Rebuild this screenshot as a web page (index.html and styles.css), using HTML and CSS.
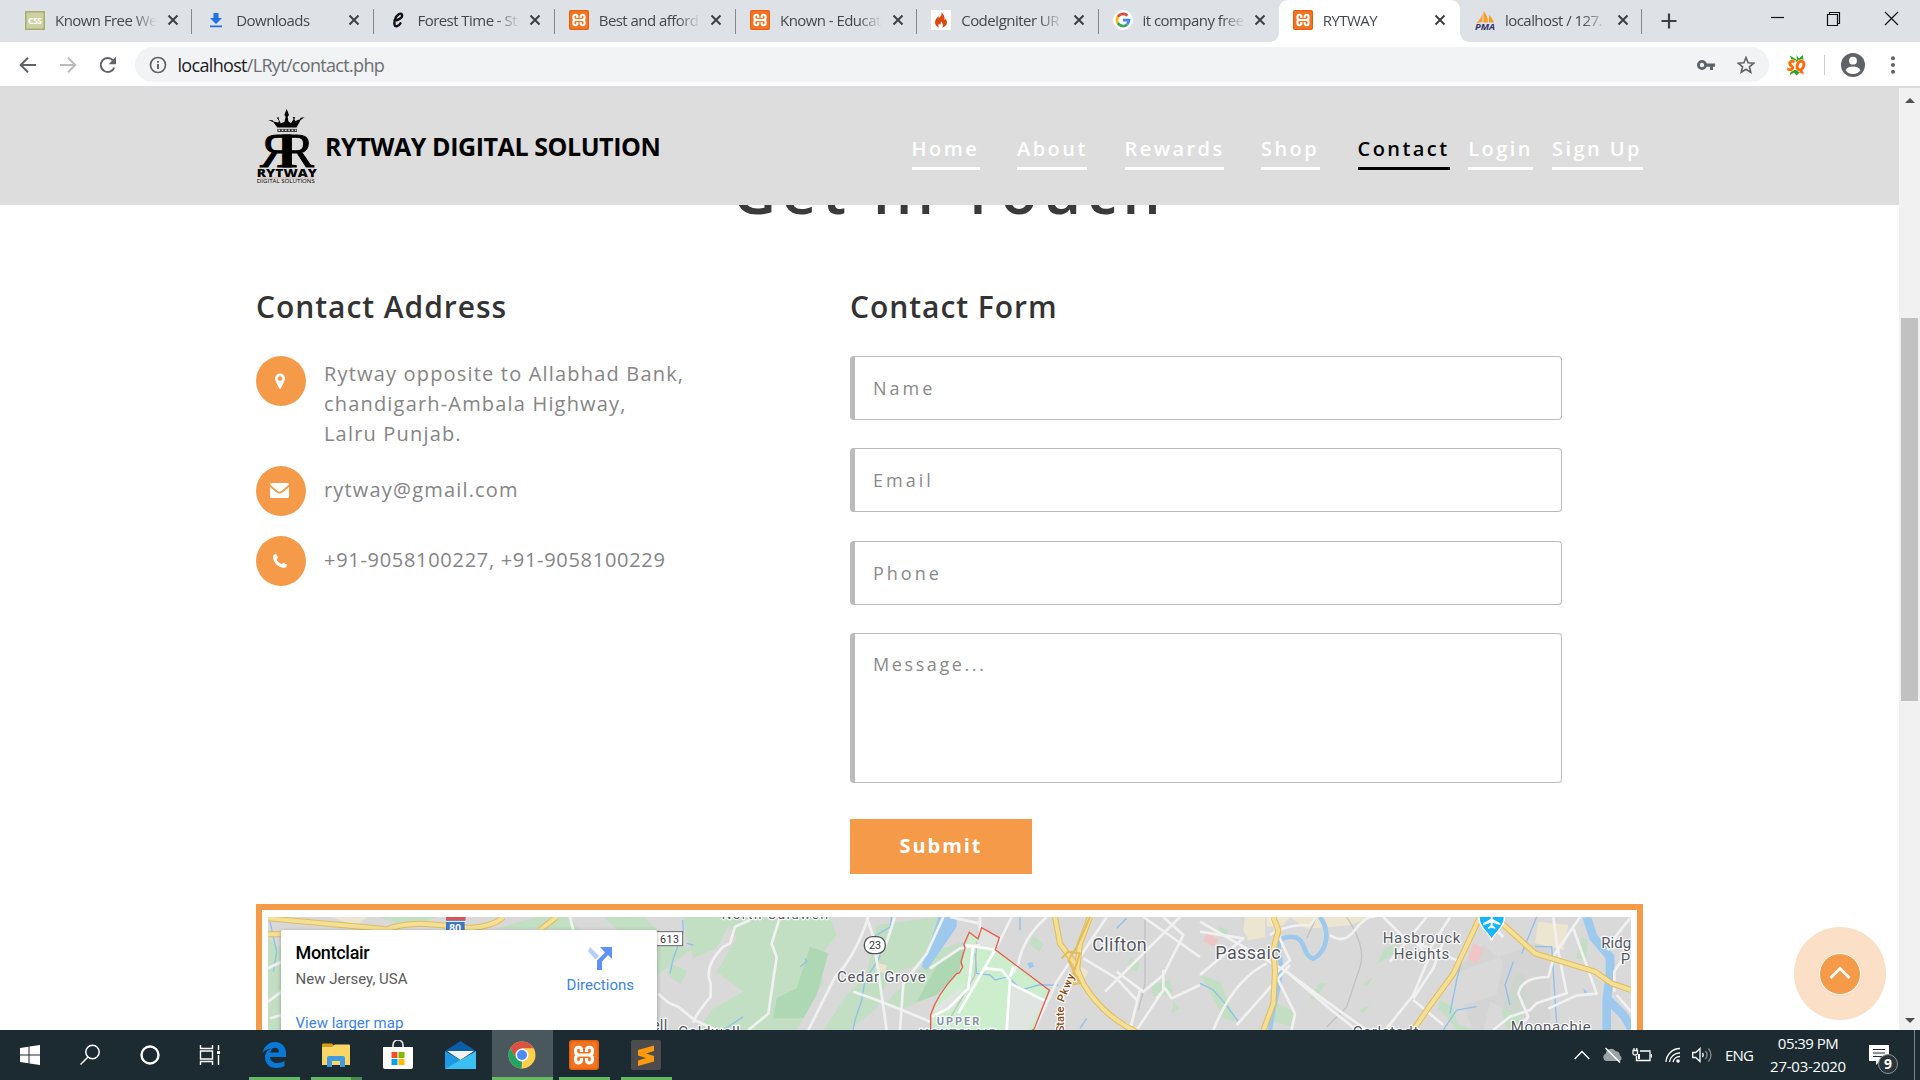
FILE: index.html
```html
<!DOCTYPE html>
<html lang="en">
<head>
<meta charset="utf-8">
<title>RYTWAY</title>
<link rel="stylesheet" href="styles.css">
</head>
<body>
<svg class="defs" width="0" height="0">
  <symbol id="close" viewBox="0 0 12 12"><path d="M1.5 1.5l9 9M10.5 1.5l-9 9" stroke="#3c4043" stroke-width="2" fill="none"/></symbol>
  <symbol id="xampp" viewBox="0 0 20 20">
    <rect width="20" height="20" rx="2" fill="#e0600f"/><rect x="1" y="1" width="18" height="18" rx="1.500" fill="#f47321"/>
    <path d="M8.300 8V6.800Q8.300 4.800 6.400 4.800T4.400 6.800V7.800Q4.400 10 7 10H13Q15.600 10 15.600 7.800V6.800Q15.600 4.800 13.600 4.800T11.700 6.800V8M8.300 12V13.200Q8.300 15.200 6.400 15.200T4.400 13.200V12.200Q4.400 10 7 10H13Q15.600 10 15.600 12.200V13.200Q15.600 15.200 13.600 15.200T11.700 13.200V12" fill="none" stroke="#fff" stroke-width="2.100"/>
  </symbol>
</svg>

<div class="tabs">
  <div class="tab">
    <svg class="fav" viewBox="0 0 20 20"><rect width="20" height="20" y="1" fill="#a9ad6a"/><rect x="1.500" y="2.500" width="17" height="16" fill="#cdd0a0"/><text x="10" y="14" font-size="9" font-weight="700" text-anchor="middle" textLength="14" fill="#fff">CSS</text></svg>
    <span class="name">Known Free We</span><svg class="x"><use href="#close"/></svg>
  </div>
  <div class="tab">
    <svg class="fav" viewBox="0 0 20 20"><path d="M7.500 3h5v5H16l-6 6-6-6h3.500zM4 15.500h12v1.800H4z" fill="#1a73e8"/></svg>
    <span class="name">Downloads</span><svg class="x"><use href="#close"/></svg>
  </div>
  <div class="tab">
    <svg class="fav" viewBox="0 0 20 20"><path d="M6.500 10.500c4 0 8.500-3.200 7.500-5.800C13 2 8.500 4.500 7 9.500s-.3 7 1.800 6.700c1.900-.3 3-1.600 3.700-2.900" fill="none" stroke="#111" stroke-width="2.400" stroke-linecap="round"/></svg>
    <span class="name">Forest Time - St</span><svg class="x"><use href="#close"/></svg>
  </div>
  <div class="tab"><svg class="fav"><use href="#xampp"/></svg><span class="name">Best and afford</span><svg class="x"><use href="#close"/></svg></div>
  <div class="tab"><svg class="fav"><use href="#xampp"/></svg><span class="name">Known - Educat</span><svg class="x"><use href="#close"/></svg></div>
  <div class="tab">
    <svg class="fav" viewBox="0 0 20 20"><rect width="20" height="20" fill="#fff"/><path d="M10.500 2.500c.5 3 -1.200 4-2.500 5.500-.5-.6-.5-1.200-.3-2C5.500 8 4 10 4 12.500 4 15 6 17 8.200 17.500c-1-1-1.200-2.600 0-4 .2.800.7 1 1.200 1.100.5-1 .2-2 1-3.100.3 1.500 2 2.500 1.500 4.300-.1.700-.5 1.200-1 1.700C14 17 16 15 16 12.500c0-1.700-1-3-1.500-3.900-.1.800-.4 1.200-1 1.600.5-3-.7-6-3-7.700z" fill="#dd4814"/></svg>
    <span class="name">CodeIgniter UR</span><svg class="x"><use href="#close"/></svg>
  </div>
  <div class="tab last">
    <svg class="fav" viewBox="0 0 20 20"><circle cx="10" cy="10" r="10" fill="#fff"/><g fill="none" stroke-width="2.700"><path d="M4.800 6.900A6 6 0 0 1 14.300 5.800" stroke="#ea4335"/><path d="M4.800 13A6 6 0 0 1 4.800 6.900" stroke="#fbbc05"/><path d="M14 14.500A6 6 0 0 1 4.800 13" stroke="#34a853"/><path d="M10 10.200h6a6 6 0 0 1-2 4.300" stroke="#4285f4"/></g></svg>
    <span class="name">it company free</span><svg class="x"><use href="#close"/></svg>
  </div>
  <div class="tab active"><svg class="fav"><use href="#xampp"/></svg><span class="name">RYTWAY</span><svg class="x"><use href="#close"/></svg></div>
  <div class="tab">
    <svg class="fav" viewBox="0 0 20 20"><path d="M1 13C4 11 7 7 7.500 3v9zM8.500 12.500V1c3 3 4.500 7 4.500 11.500zM14 12.500V5c2.500 2 4 4.500 5 7.500z" fill="#f89c2a"/><text x="0" y="19.500" font-size="8" font-weight="700" font-style="italic" textLength="20" lengthAdjust="spacingAndGlyphs" fill="#33356b">PMA</text></svg>
    <span class="name">localhost / 127.</span><svg class="x"><use href="#close"/></svg>
  </div>
  <svg class="plus" viewBox="0 0 16 16"><path d="M8 .5v15M.5 8h15" stroke="#3c4043" stroke-width="2.200"/></svg>
  <svg class="winbtns" viewBox="0 0 130 16"><g fill="none" stroke="#111" stroke-width="1.200"><path d="M1 7.500h13"/><path d="M57.500 4.500h10v11h-10zM59.500 4.500v-2h10v11h-2"/><path d="M115 2l13 13M128 2l-13 13"/></g></svg>
</div>

<div class="toolbar">
  <svg class="nav-arrow" viewBox="0 0 18 18"><path d="M17 9H2M9 1.700L1.700 9 9 16.300" fill="none" stroke="#5f6368" stroke-width="2"/></svg>
  <svg class="nav-arrow" viewBox="0 0 18 18"><path d="M1 9h15M9 1.700L16.300 9 9 16.300" fill="none" stroke="#babcbe" stroke-width="2"/></svg>
  <svg class="nav-arrow" viewBox="0 0 18 18"><path d="M15.300 11.500A7 7 0 1 1 14 4.300" fill="none" stroke="#5f6368" stroke-width="2"/><path d="M17 .7v7.500H9.600z" fill="#5f6368"/></svg>
  <div class="omnibox">
    <svg class="info" viewBox="0 0 18 18"><circle cx="9" cy="9" r="7.500" fill="none" stroke="#5f6368" stroke-width="1.700"/><path d="M9 8v5M9 5v1.800" stroke="#5f6368" stroke-width="1.900"/></svg>
    <span class="url"><b>localhost</b>/LRyt/contact.php</span>
    <svg class="key" viewBox="0 0 18 12"><circle cx="5" cy="6" r="3.600" fill="none" stroke="#5f6368" stroke-width="2.800"/><path d="M8 4.500h10v3.200h-2V11h-3V7.700H8z" fill="#5f6368"/></svg>
    <svg class="star" viewBox="0 0 18 18"><path d="M9 1.500l2.100 5.300 5.700.4-4.400 3.600 1.400 5.500L9 13.300l-4.800 3 1.400-5.500L1.200 7.200l5.700-.4z" fill="none" stroke="#5f6368" stroke-width="1.600"/></svg>
  </div>
  <svg class="sq" viewBox="0 0 20 22"><path d="M10 6L3 1.500l1.500 5L10 8l6.500-1.500L16 1l-4 3.500L9.500 1zM10 16l-6 0-1 5 4-2.500 2.500 3 3-3 4 2.500-2-5z" fill="#2fa31c"/><text x="0" y="17" font-size="15" font-weight="800" font-style="italic" textLength="19" lengthAdjust="spacingAndGlyphs" fill="#ff6a00" stroke="#fff" stroke-width="1" paint-order="stroke">SQ</text></svg>
  <i class="bar-sep"></i>
  <svg class="avatar" viewBox="0 0 24 24"><circle cx="12" cy="12" r="12" fill="#5f6368"/><circle cx="12" cy="7.700" r="3.900" fill="#fff"/><path d="M4.500 17.200C6 14.500 9 13.500 12 13.500s6 1 7.500 3.700C18 19.500 15.500 21 12 21s-6-1.500-7.500-3.800z" fill="#fff"/></svg>
  <svg class="dots" viewBox="0 0 4 18"><g fill="#5f6368"><circle cx="2" cy="2.200" r="2"/><circle cx="2" cy="9" r="2"/><circle cx="2" cy="15.800" r="2"/></g></svg>
</div>

<div class="viewport">
  <div class="page">
    <header class="site-header">
      <svg class="logo" viewBox="50 58 182 226">
        <path d="M140 58l4 10 3 8-4 5 2 14 8 6 8-13-3-6 8 1-3 6 3 5 14-5 2-5 12-1-12 8-12 23H112L100 98 85 91l13 1 2 4 15 3 2-5-4-6-3-4 7-1-1 5 6 13 11-4 4-16-4-5 3-8z"/>
        <path d="M112 118h59v9h-59z" fill="#333"/><path d="M115 122h54" stroke="#ddd" stroke-width="4" stroke-dasharray="5 5"/>
        <text class="logo-r" x="124" y="233">R</text>
        <g transform="translate(282 0) scale(-1 1)"><text class="logo-r" x="124" y="233">R</text></g>
        <text x="50" y="262" font-size="33" font-weight="800" textLength="181" lengthAdjust="spacingAndGlyphs">RYTWAY</text>
        <path d="M60 266h160" stroke="#b98577" stroke-width="1.500"/>
        <text x="50" y="282" font-size="16" textLength="175" lengthAdjust="spacingAndGlyphs">DIGITAL SOLUTIONS</text>
      </svg>
      <div class="brand">RYTWAY DIGITAL SOLUTION</div>
      <nav class="menu">
        <a>Home</a><a>About</a><a>Rewards</a><a>Shop</a><a class="current">Contact</a><a>Login</a><a>Sign Up</a>
      </nav>
    </header>
    <h1>Get in Touch</h1>
    <main class="columns">
      <section class="address">
        <h2>Contact Address</h2>
        <ul>
          <li><span class="dot"><svg width="12" height="18" viewBox="0 0 12 18"><path d="M6 1.500a5 5 0 0 1 5 5c0 1.500-.7 2.500-1 3.200L6.800 16.500a.9.900 0 0 1-1.600 0L2 9.700c-.3-.7-1-1.700-1-3.200a5 5 0 0 1 5-5z" fill="#fff"/><circle cx="6" cy="6.500" r="2.300" fill="#f49a48"/></svg></span>
            <p>Rytway opposite to Allabhad Bank,<br>chandigarh-Ambala Highway,<br>Lalru Punjab.</p></li>
          <li><span class="dot"><svg width="20" height="16" viewBox="0 0 20 16"><path d="M0 1.500Q0 0 1.500 0h16Q19 0 19 1.500L11.500 8q-2 1.500-4 0zM0 4l6.500 5.500q3 2 6 0L19 4v9.500q0 1.500-1.500 1.500h-16Q0 15 0 13.500z" fill="#fff"/></svg></span>
            <p>rytway@gmail.com</p></li>
          <li><span class="dot"><svg width="17" height="16" viewBox="0 0 17 16"><path d="M1 3.500C1 2 3 .8 4 1l2 3.600c.2.700-1.500 1.500-1.300 2.200 1 2 2.600 3.500 4.600 4.300.8.200 1.400-1.600 2.200-1.400l3.500 2c.4.800-.8 2.800-2.300 3C7 15.500 1 9.500 1 3.500z" fill="#fff"/></svg></span>
            <p class="phones">+91-9058100227, +91-9058100229</p></li>
        </ul>
      </section>
      <form class="contact">
        <h2>Contact Form</h2>
        <input placeholder="Name"><input placeholder="Email"><input placeholder="Phone">
        <textarea placeholder="Message..."></textarea>
        <button type="button">Submit</button>
      </form>
    </main>
    <div class="map">
      <svg class="tiles" viewBox="54 66 4089 339">
        <rect x="54" y="66" width="4089" height="339" fill="#d9d9d9"/>
        <g fill="#c2dfc3">
          <path d="M54 130L95 160V405H54zM380 66L560 66 500 90 460 90zM740 100L860 66H960L990 105zM1060 66H1180L1230 110H1110zM1220 150L1262 152 1330 160 1270 205 1220 240zM1300 66H1450L1400 160 1330 190 1310 130zM1260 205l52 22-20 40-40-28zM1420 66H1650L1660 160 1590 330 1500 405H1340L1390 340 1480 290 1400 230 1460 130z"/>
          <path d="M1600 66H1740L1760 120 1700 200 1720 260 1640 405H1500L1560 250zM1880 90L2070 66 2030 200 1920 240 1880 340 1800 405H1720L1790 300 1850 240zM2080 160L2140 140 2130 220 2060 300 1960 340 1900 330 2000 230zM2350 120l30 28-12 24-30-24zM2640 185l30 25-12 22-24-20zM2700 270l60-15 10 40-60 10zM2770 320l20 20-25 15z"/>
          <path d="M2850 240L2910 260 2960 380 2920 370 2880 290zM2910 95l28 12-15 16-20-12zM3230 265l-40 50-12-6 30-45zM3080 325l60 28-20 40-55-15zM3450 150l-30 35-40 22 25-50zM3370 245l-20 30-10-10zM3360 330l-20 25-12-10zM3570 315l40 20 10 50 50 20h-50l-40-50-18-15zM3800 230l25 10 5 70-20 90h-40l-15-50zM3995 125l18 10-5 60-30-5z"/>
        </g>
        <g fill="#aed7b3"><path d="M1680 155L1735 175 1700 300 1660 370 1570 370 1580 310 1640 280zM2070 195L2140 160 2135 220 2060 300 2000 320z"/></g>
        <path d="M2148 150L2160 112 2186 130 2197 98 2250 126 2240 164 2400 286 2355 400 2340 405H2042L2042 360 2075 290 2125 235 2135 205z" fill="#cdeecd"/>
        <path d="M2190 130L2197 98 2250 126 2240 160 2170 150zM2290 270l100 45-60 90h-70zM2040 350l100-80-30 70z" fill="#e1e5e1"/>
        <path d="M3600 240L3700 150 3760 200 3740 300 3640 330 3670 405H3700L3720 320 3900 405V130z" fill="#d2d2d2" opacity=".7"/>
        <g fill="#ece5d0"><path d="M240 66h110l-30 25zM1885 205l25 5-5 25-20-5zM2985 66h60v60l-50 10-15-30zM3050 66h70l-20 25-50 5zM3865 80l90 10-15 75-85-20zM3120 66h240l-60 25-130 10zM2495 215l20 15-12 20-20-10z"/></g>
        <g fill="#efc5c5"><path d="M2872 115l35 18-18 22-30-18zM3670 145l32 18-22 45-28-18z"/></g>
        <g fill="#9ec9ee"><path d="M2065 66h55v30L2045 205 2030 225l-15-10 20-55zM2332 205l15-5 5 15-14 5zM4000 280l12 10-8 10z"/></g>
        <g fill="none" stroke="#8ec1ec" stroke-width="4"><path d="M60 80l20 90-10 60M1260 235L1270 190 1300 110 1298 75M1330 150L1310 145M1420 405l60-40M1925 66l-5 30-50 30 20 60-45 70-10 60-20 60-10 50M1650 215l20-15-5-10M2175 175l5 60 40 5 15 15 40-10 40 40 50-15 60 0M2310 66v40M2600 100l30-30M2490 400l20-30M2850 265l40 20 35 40 40 55M3580 405l40-60 60-10M3600 355l20-100 20-80 45-90M3780 330l-15-60 25-70M3860 66l-45 110M3855 155h50l15 230"/></g>
        <g fill="none" stroke="#9ec9ee"><path d="M3210 66c30 40 25 100-20 125-35-10-20-60-60-65-45-5-50 25-40 60 10 70-20 130-30 220" stroke-width="14"/><path d="M4010 66l20 60 50 60 0 50-10 80 0 89M4070 310l50 50 25 40" stroke-width="26"/></g>
        <g fill="none" stroke="#bcbcbc" stroke-width="4" opacity=".8"><path d="M2180 140l-5 100-80 140M2685 66v200l-20 80M3290 66q60 90 40 150l-40 120-60 60M3170 130l30-64"/></g>
        <g fill="none" stroke="#f1f1f1" stroke-width="8" stroke-linejoin="round">
          <path d="M54 220l41-20M54 320l41-30M60 370l35-10M640 66v30M960 66l10 40M1225 295q25 30 60 40l48 40 65 30M1500 75l-45 20-15 50-20 10q-60 60-38 110l0 40q-50 60-52 78M1590 66l-25 80 15 40-25 170-60 49M1855 66q-40 120-100 180l-80 159M1850 66l20 60 40 279M1935 66l-30 90-30 30M2080 66l-50 110-70 90-10 139M2100 66l90 20M2190 66v50M2040 220l90-60 60-10"/>
          <path d="M2285 66l-45 90M2390 66q-70 60-85 140l-25 40M2460 200l-40 60-65 140M2570 66l-80 120M2790 66L2565 290M2680 66l170 120M2600 230l80 60 60-50 60-120-60-54M2720 310l25-30 20 30 85-40M2560 350l100 55 80-120 0-60M2640 405l30-120M1810 290q90 30 230 90M2500 190l100 60 60 65"/>
          <path d="M2850 80l260 150 120 90 120 85M2850 240l130-110-130-20M2890 405q60-150 160-200M2960 390l160-180M3060 66l60 130-45 40 60 120-10 49M3110 230l140 120 70 55M3060 120q40-30 120-30l20-24M3400 66l60 60 160 70M3530 66L3420 200M3540 180l-50 120-80 100M3580 140l-30 80-60 90M3600 66l-70 110-30-30M3490 315l90 75M3240 120q40 30 75-15t60-39"/>
          <path d="M3730 405l50-40 60-20 20-20 90-30-30-150-10-79M3990 66l-75 110-20 70q-80 0-90 50l30 70-40 39M3970 100l70 196-60 5-85 40M4143 150l-50 80v60M4143 66l-40 50-30 50M4100 300l43 50M3700 66l60 60"/>
        </g>
        <g fill="none" stroke="#fff" stroke-width="8"><path d="M2145 150l95 15M2170 150l-15 130-60 60-50 25M2235 165l-110 190M2205 220l50 5 25 30-10 150M2280 265l110 55M2280 245l10-30"/></g>
        <g fill="none" stroke="#e2bd58" stroke-width="18" stroke-linejoin="round"><path d="M54 70l350 32M54 118h42M404 105q60-22 126-18t130 12q70-5 100-33M870 105l50-39M2415 66l15 80 45 60 25 60q60 100 170 150M2520 66l-30 80-10 90-30 40M3070 66l15 40-15 60 5 60-5 100-30 80M3690 66l-80 170-80 110-40 59M3745 75l110 100 180 55 50 35 58 20"/></g>
        <g fill="none" stroke="#f3df97" stroke-width="12" stroke-linejoin="round"><path d="M54 70l350 32M54 118h42M404 105q60-22 126-18t130 12q70-5 100-33M870 105l50-39M2415 66l15 80 45 60 25 60q60 100 170 150M2520 66l-30 80-10 90-30 40M3070 66l15 40-15 60 5 60-5 100-30 80M3690 66l-80 170-80 110-40 59M3745 75l110 100 180 55 50 35 58 20"/></g>
        <path d="M2435 190l20-20 35 5-20 60 20 30-40 5M2520 66l-40 90-25 40 30 60" fill="none" stroke="#e2bd58" stroke-width="6"/>
        <path d="M2042 405V360Q2060 300 2120 236l8-2 10-18-5-16 12-40-3-12 16-36 26 20 11-34 53 30-12 36 162 122-45 115-12 10" fill="none" stroke="#ea5a4c" stroke-width="4"/>
        <path d="M588 66h58v9l-2 6v24h-56z" fill="#3f79c4"/><path d="M588 66h58v10h-58z" fill="#d75552"/><path d="M588 79h58" stroke="#fff" stroke-width="3"/>
        <text x="597" y="112" font-size="32" font-weight="700" fill="#fff">80</text>
        <rect x="1215" y="110" width="83" height="42" fill="#fff" stroke="#666" stroke-width="3"/><text x="1230" y="143" font-size="32" textLength="57" fill="#333">613</text>
        <rect x="1843" y="125" width="63" height="51" rx="24" fill="#fff" stroke="#555" stroke-width="4"/><text x="1857" y="162" font-size="32" textLength="36" fill="#333">23</text>
        <g transform="translate(49 0)">
          <path d="M3676 136c-4-22-38-34-38-68v-30h76v30c0 34-34 46-38 68z" fill="#13b5fb" stroke="#fff" stroke-width="4"/>
          <path d="M3673 60h6v12l23 13v6l-23-8v8l8 7v4l-11-4-11 4v-4l8-7v-8l-23 8v-6l23-13z" fill="#fff"/>
        </g>
        <g class="halo">
          <text x="1415" y="73" font-size="40" textLength="320">North Caldwell</text>
          <text x="1761" y="260" font-size="45" textLength="266">Cedar Grove</text>
          <text x="2527" y="168" font-size="54" textLength="163" fill="#514a66">Clifton</text>
          <text x="2896" y="192" font-size="54" textLength="196" fill="#514a66">Passaic</text>
          <text x="3398" y="145" font-size="45" textLength="233">Hasbrouck</text>
          <text x="3431" y="193" font-size="45" textLength="167">Heights</text>
          <text x="4054" y="159" font-size="45">Ridg</text>
          <text x="4112" y="207" font-size="45">P</text>
          <text x="3308" y="426" font-size="45" textLength="197">Carlstadt</text>
          <text x="3782" y="411" font-size="45" textLength="240">Moonachie</text>
          <text x="1285" y="426" font-size="45" textLength="185">Caldwell</text>
          <text x="1180" y="405" font-size="45" textLength="72">Fell</text>
          <text class="area" x="2060" y="391" font-size="33" textLength="128">UPPER</text>
          <text class="area" x="2008" y="427" font-size="33" textLength="230">MONTCLAIR</text>
          <text class="road" transform="translate(2441 412) rotate(-90)" font-size="33">State</text>
          <text class="road" transform="translate(2441 323) rotate(-68)" font-size="33" textLength="88">Pkwy</text>
        </g>
      </svg>
      <div class="card">
        <div class="place"><strong>Montclair</strong><span>New Jersey, USA</span><a>View larger map</a></div>
        <div class="directions"><svg width="24" height="24" viewBox="0 0 24 24"><path d="M2 1l9 9-3.500 3.500L0 5z" fill="#b7cdfb"/><path d="M9 24v-9.500L17 6.500 12 1h12v12l-4-4-6 6.500V24z" fill="#5f92f8"/></svg><a>Directions</a></div>
      </div>
    </div>
    <div class="to-top"><span><svg width="24" height="14" viewBox="0 0 24 14"><path d="M2.500 12L12 2.500 21.500 12" fill="none" stroke="#fff" stroke-width="2.800"/></svg></span></div>
  </div>
  <div class="scrollbar">
    <svg width="10" height="5" viewBox="0 0 8 5" preserveAspectRatio="none"><path d="M0 5l4-5 4 5z" fill="#505050"/></svg>
    <i></i>
    <svg width="10" height="5" viewBox="0 0 8 5" preserveAspectRatio="none"><path d="M0 0l4 5 4-5z" fill="#505050"/></svg>
  </div>
</div>

<div class="taskbar">
  <div class="sys"><svg width="20" height="20" viewBox="0 0 20 20"><path d="M0 3l8.500-1.200v7.700H0zM9.500 1.600L20 0v9.500H9.500zM0 10.500h8.500v7.700L0 17zM9.500 10.500H20V20L9.500 18.400z" fill="#fff"/></svg></div>
  <div class="sys"><svg width="22" height="22" viewBox="0 0 22 22"><circle cx="13.500" cy="8" r="6.700" fill="none" stroke="#fff" stroke-width="1.500"/><path d="M9 13L1.500 20.500" stroke="#fff" stroke-width="1.500"/></svg></div>
  <div class="sys"><svg width="20" height="20" viewBox="0 0 20 20"><circle cx="10" cy="10" r="8.500" fill="none" stroke="#fff" stroke-width="2.400"/></svg></div>
  <div class="sys"><svg width="22" height="20" viewBox="0 0 22 20"><path d="M1.500 0v3.500h12V0M1.500 20v-3.500h12V20M1.500 6h12v8h-12zM19.500 0v5M19.500 10v10" fill="none" stroke="#fff" stroke-width="1.400"/><path d="M18 6h3v3h-3z" fill="#fff"/></svg></div>
  <div class="app run first"><svg width="25" height="26" viewBox="0 0 25 26"><path d="M.5 11C2 4 7 0 13 0c7 0 11 5 11 11v4H8c.3 4 3.500 6 7.500 6 3 0 5.500-1 7-2v5c-2 1.300-5 2-8 2C7 26 3 21 3 15.500 3 11 5.500 8 9 6.500 5 6.800 2 8.500.5 11zM8.200 10.500H17c0-3-1.500-4.800-4-4.800S8.700 7.500 8.200 10.500z" fill="#0a78d7"/></svg></div>
  <div class="app run two"><svg width="28" height="24" viewBox="0 0 28 24"><path d="M0 1.500Q0 .5 1 .5h9l2.500 3H0z" fill="#dd9c0c"/><path d="M0 3.500h10l3-2h14q1 0 1 1V22H0z" fill="#fbd667"/><path d="M5 24V15q0-2 2-2h14q2 0 2 2v9h-5v-6h-8v6z" fill="#3f9be0"/></svg></div>
  <div class="app"><svg width="30" height="30" viewBox="0 0 30 30"><path d="M10 8V5a5 5 0 0 1 10 0v3" fill="none" stroke="#ddd" stroke-width="1.700"/><path d="M0 7h30v20q0 2-2 2H2q-2 0-2-2z" fill="#fff"/><path d="M8.500 12h6v6h-6z" fill="#f25022"/><path d="M15.500 12h6v6h-6z" fill="#7fba00"/><path d="M8.500 19h6v6h-6z" fill="#00a4ef"/><path d="M15.500 19h6v6h-6z" fill="#ffb900"/></svg></div>
  <div class="app"><svg width="31" height="28" viewBox="0 0 31 28"><path d="M0 10L15.500 0 31 10z" fill="#0a5ea8"/><path d="M0 10l31 18H0z" fill="#1d9ae6"/><path d="M31 10v18H0z" fill="#3cc0f2"/><path d="M2 10h27l-13.500 9z" fill="#f4f4f4"/></svg></div>
  <div class="app run on"><svg width="28" height="28" viewBox="0 0 28 28"><circle cx="14" cy="14" r="13.500" fill="#fcd04b"/><path d="M2.300 7.200A13.500 13.500 0 0 1 25.700 7.300H14L8 17.500z" fill="#dd5145"/><path d="M2.300 7.200L8.200 17.300 14 20.500 13.500 27.500A13.500 13.500 0 0 1 2.300 7.200z" fill="#21a464"/><circle cx="14" cy="14" r="6.500" fill="#fff"/><circle cx="14" cy="14" r="5" fill="#4c8bf5"/></svg></div>
  <div class="app run"><svg width="30" height="30"><use href="#xampp"/></svg></div>
  <div class="app run"><svg width="30" height="30" viewBox="0 0 30 30"><rect width="30" height="30" rx="2" fill="#4c4c4c"/><path d="M23 5.500v5.500l-8 2.500 8 2.500v5.500L7 26v-5.500l8-2.500-8-2.500V10z" fill="#ff9a0b"/></svg></div>
  <div class="tray">
    <svg width="16" height="10" viewBox="0 0 16 10"><path d="M.7 9L8 1.500 15.300 9" fill="none" stroke="#fff" stroke-width="1.400"/></svg>
    <svg class="cloud" width="21" height="16" viewBox="0 0 21 16"><path d="M4 14a4 4 0 0 1-.3-7.500A5.500 5.500 0 0 1 13.500 4 5 5 0 0 1 18 8.500 3 3 0 0 1 17.500 14z" fill="#9ca3a5"/><path d="M3.500 1l14.500 14.500" stroke="#fff" stroke-width="1.500"/></svg>
    <svg class="batt" width="20" height="14" viewBox="0 0 20 14"><path d="M8 3h10v9.500H4.500V8M19.500 6v3.500M1 2.500h4.500V5q0 2-2.300 2T1 5zM2 0v2.500M4.700 0v2.500" fill="none" stroke="#fff" stroke-width="1.300"/><path d="M6 6h2v5H6z" fill="#fff"/></svg>
    <svg class="wifi" width="16" height="16" viewBox="0 0 16 16"><g fill="none" stroke="#fff" stroke-width="1.300"><path d="M8 15a7 7 0 0 1 7-5.500M4.500 15A10 10 0 0 1 15 6M1 15A14 14 0 0 1 15 1.500"/></g><circle cx="13" cy="14" r="1.800" fill="#fff"/></svg>
    <svg class="vol" width="21" height="16" viewBox="0 0 21 16"><path d="M.7 5.500h3L8 1.500v13l-4.300-4h-3z" fill="none" stroke="#fff" stroke-width="1.300"/><path d="M10.500 6q1.500 2 0 4" fill="none" stroke="#fff" stroke-width="1.300"/><path d="M13.500 4q3 4 0 8M16.500 1.500q5 6.500 0 13" fill="none" stroke="#7f898c" stroke-width="1.300"/></svg>
    <span class="lang">ENG</span>
    <span class="clock"><span>05:39 PM</span><span>27-03-2020</span></span>
    <span class="note"><svg width="20" height="20" viewBox="0 0 20 20"><path d="M0 0h20v16h-9l-4 4v-4H0z" fill="#fff"/><path d="M4 4.500h12M4 8h12M4 11.500h12" stroke="#1b2b31" stroke-width="1.200"/></svg><b>9</b></span>
  </div>
</div>
</body>
</html>
```
FILE: styles.css
```css
* { box-sizing: border-box; }
body {
  margin: 0; width: 1920px; height: 1080px; overflow: hidden;
  display: flex; flex-direction: column;
  font-family: "Open Sans", "Noto Sans", sans-serif; background: #fff;
}
svg { flex: none; display: block; }
.defs { position: absolute; }

/* Browser tabs */
.tabs { display: flex; height: 42px; padding-left: 11px; background: #dee1e6; flex: none; }
.tab {
  position: relative; width: 181.25px; flex: none; height: 42px; padding: 0 0 2px 14px;
  display: flex; align-items: center;
}
.tab::after { content: ""; position: absolute; right: 0; top: 9px; width: 1px; height: 25px; background: #85888c; }
.tab.last::after { display: none; }
.fav { width: 20px; height: 20px; margin-right: 10px; }
.name {
  width: 103px; overflow: hidden; white-space: nowrap; font-size: 15px; letter-spacing: -.55px; color: #45494d;
  -webkit-mask-image: linear-gradient(90deg, #000 76%, transparent 99%);
  mask-image: linear-gradient(90deg, #000 76%, transparent 99%);
}
.x { width: 12px; height: 12px; margin-left: 8.500px; }
.tab.active { background: #fff; border-radius: 9px 9px 0 0; left: -1px; }
.tab.active::before, .tab.active::after {
  content: ""; position: absolute; top: auto; bottom: 0; width: 9px; height: 9px;
  background: radial-gradient(circle at 0 0, transparent 8.500px, #fff 9px);
}
.tab.active::before { left: -9px; }
.tab.active::after { right: -9px; background: radial-gradient(circle at 100% 0, transparent 8.500px, #fff 9px); }
.plus { width: 16px; height: 16px; margin: 13px 0 0 19px; }
.winbtns { width: 130px; height: 16px; margin: 10px 0 0 93px; }

/* Address bar */
.toolbar {
  display: flex; align-items: center; height: 46px; flex: none;
  padding: 0 0 0 18.500px; border-bottom: 1px solid #dadce0; box-shadow: inset 0 -1px #dadce0;
}
.nav-arrow { width: 18px; height: 18px; margin-right: 22px; }
.omnibox {
  display: flex; align-items: center; width: 1634px; height: 35px; margin-left: -3.500px;
  padding: 0 14px; border-radius: 18px; background: #f1f3f4;
}
.info { width: 18px; height: 18px; }
.url { flex: 1; margin-left: 10.500px; font-size: 18px; letter-spacing: -.68px; color: #6b6f73; }
.url b { font-weight: 400; color: #202124; }
.key { width: 18px; height: 12px; margin-right: 22px; }
.star { width: 18px; height: 18px; }
.sq { width: 20px; height: 24px; margin-left: 18px; }
.bar-sep { width: 1px; height: 20px; margin-left: 17px; background: #cdd0d4; }
.avatar { width: 24px; height: 24px; margin-left: 16px; }
.dots { width: 4px; height: 18px; margin-left: 26px; }

/* Site */
.viewport { display: flex; height: 942px; flex: none; }
.page { position: relative; width: 1899px; height: 942px; overflow: hidden; }
.site-header {
  position: relative; z-index: 1; display: flex; height: 117px; padding: 0 256px;
  background: #ddd;
}
.logo { width: 62px; height: 75px; margin-top: 21px; }
.logo-r { font: 400 148px "Liberation Serif", serif; stroke: #000; stroke-width: 3px; }
.brand {
  margin: 41px 0 0 7px; font-size: 25px; line-height: 34px; font-weight: 700; letter-spacing: -.43px;
  white-space: nowrap; color: #000;
}
.menu { display: flex; gap: 37.500px; margin: 45px 0 0 auto; }
.menu a {
  width: 68px; height: 37px; border-bottom: 3px solid #fff; font-size: 20px; line-height: 32px; font-weight: 600;
  letter-spacing: 2.450px; white-space: nowrap; color: #fff;
}
.menu a:nth-child(2) { width: 70px; }
.menu a:nth-child(3) { width: 99px; }
.menu a:nth-child(4) { width: 59px; }
.menu a.current { width: 92px; color: #000; border-color: #000; }
.menu a:nth-child(n+6) { width: 65px; margin-left: -18.750px; }
.menu a:last-child { width: 91px; }
h1 {
  margin: -44px 0 0; text-align: center; font-size: 60px; line-height: 60px; font-weight: 600;
  letter-spacing: 5.800px; color: #3a3a3a;
}
.columns { display: grid; grid-template-columns: 594px 712px; margin: 68px 0 0 256px; }
h2 { margin: 0 0 31px; font-size: 30px; line-height: 36px; font-weight: 600; letter-spacing: .950px; color: #333; }
ul { margin: 0; padding: 0; list-style: none; }
li { display: flex; margin-bottom: 20px; }
li:first-child { margin-bottom: 17px; }
.dot {
  display: flex; align-items: center; justify-content: center; width: 50px; height: 50px;
  padding-right: 2px; border-radius: 50%; background: #f49a48; flex: none;
}
li p { margin: 9px 0 -9px 18px; font-size: 20px; line-height: 30px; letter-spacing: 1.180px; color: #858585; white-space: nowrap; }
li:first-child p { margin: 3px 0 0 18px; }
li .phones { letter-spacing: .700px; }
.contact { display: flex; flex-direction: column; align-items: flex-start; }
input, textarea {
  width: 712px; height: 64px; margin: 0 0 28.300px; padding: 0 18px; border: 1px solid #bbb; border-left-width: 5px;
  border-radius: 4px; background: #fff; font: 400 18px "Open Sans", sans-serif; letter-spacing: 3px; outline: none;
}
textarea { height: 150px; margin: 0 0 36px; padding: 18px; resize: none; line-height: 24.500px; letter-spacing: 2.600px; }
::placeholder { color: #8a8a8a; opacity: 1; }
button {
  width: 182px; height: 55px; padding: 0 0 2px; border: 0; background: #f49a48; color: #fff;
  font: 700 20px "Open Sans", sans-serif; letter-spacing: 1.950px;
}

/* Embedded map */
.map {
  position: relative; width: 1387px; height: 400px; margin: 30px 0 0 256px; padding: 7px 6px 6px;
  border: 6px solid #f49a48; font-family: Roboto, sans-serif;
}
.tiles { width: 1363px; height: 113px; }
.halo text { fill: #54575f; stroke: #fff; stroke-width: 7px; paint-order: stroke; stroke-linejoin: round; }
.halo .area { fill: #8492ad; font-weight: 700; }
.halo .road { fill: #8a4a12; font-weight: 500; }
.card {
  position: absolute; left: 19px; top: 20px; width: 376px; height: 120px; padding: 13px 23px 0 14.500px;
  display: flex; justify-content: space-between; background: #fff; border-radius: 2px;
  box-shadow: 0 1px 4px rgba(0, 0, 0, .3); font-size: 15px; color: #5b5b5b;
}
.place { display: flex; flex-direction: column; }
.place strong { font-size: 18px; line-height: 20px; font-weight: 500; letter-spacing: -.3px; color: #000; }
.place span { margin-top: 7px; line-height: 18px; }
.card a { color: #3c84e4; }
.place a { margin-top: 26px; line-height: 18px; }
.directions { display: flex; flex-direction: column; align-items: center; padding-top: 3px; }
.directions a { margin-top: 6px; line-height: 18px; }
.to-top {
  position: absolute; left: 1794px; top: 839px; width: 92px; height: 93px; border-radius: 50%;
  display: flex; align-items: center; justify-content: center; background: #fbdfc6;
}
.to-top span {
  display: flex; align-items: center; justify-content: center; width: 42px; height: 42px;
  border: 1.500px solid #fff; border-radius: 50%; background: #f49a48; padding-bottom: 2px;
}
.scrollbar {
  width: 21px; height: 942px; padding: 10px 2px 7px; background: #f1f1f1;
  display: flex; flex-direction: column; align-items: center;
}
.scrollbar i { width: 17px; height: 383px; margin: 215px 0 317px; background: #c1c1c1; flex: none; }

/* Taskbar */
.taskbar { display: flex; height: 50px; flex: none; background: #1b2b31; color: #fff; }
.sys, .app { display: flex; align-items: center; justify-content: center; width: 60px; height: 50px; flex: none; }
.app { position: relative; width: 62px; }
.app.first { margin-left: 3px; }
.run::after { content: ""; position: absolute; left: 6px; bottom: 0; width: 51px; height: 3px; background: #62bb62; }
.two::after { background: linear-gradient(90deg, #62bb62 40px, #488a4c 40px); }
.on { background: linear-gradient(#4a585d, #4a585d) 1px 0 / 61px 50px no-repeat; }
.on::after { left: 1px; width: 61px; }
.tray { display: flex; align-items: center; margin-left: auto; height: 50px; padding-right: 5px; }
.cloud { margin-left: 12px; }
.batt { margin-left: 9px; }
.wifi { margin-left: 13px; }
.vol { margin-left: 11px; }
.lang { width: 29px; margin-left: 12px; font-size: 15px; letter-spacing: -.77px; }
.clock { display: flex; flex-direction: column; align-items: center; width: 80px; margin-left: 14px; }
.clock span { font-size: 15px; line-height: 23px; letter-spacing: -.55px; white-space: nowrap; }
.clock span + span { letter-spacing: -.25px; }
.note { position: relative; width: 46px; height: 50px; margin-left: 21px; padding-top: 15px; border-right: 1px solid #7c8688; }
.note b {
  position: absolute; left: 9px; top: 24px; width: 20px; height: 20px; border-radius: 50%;
  border: 1px solid #8b9496; background: #2b3539; font-size: 14px; line-height: 18px; text-align: center;
}
```
